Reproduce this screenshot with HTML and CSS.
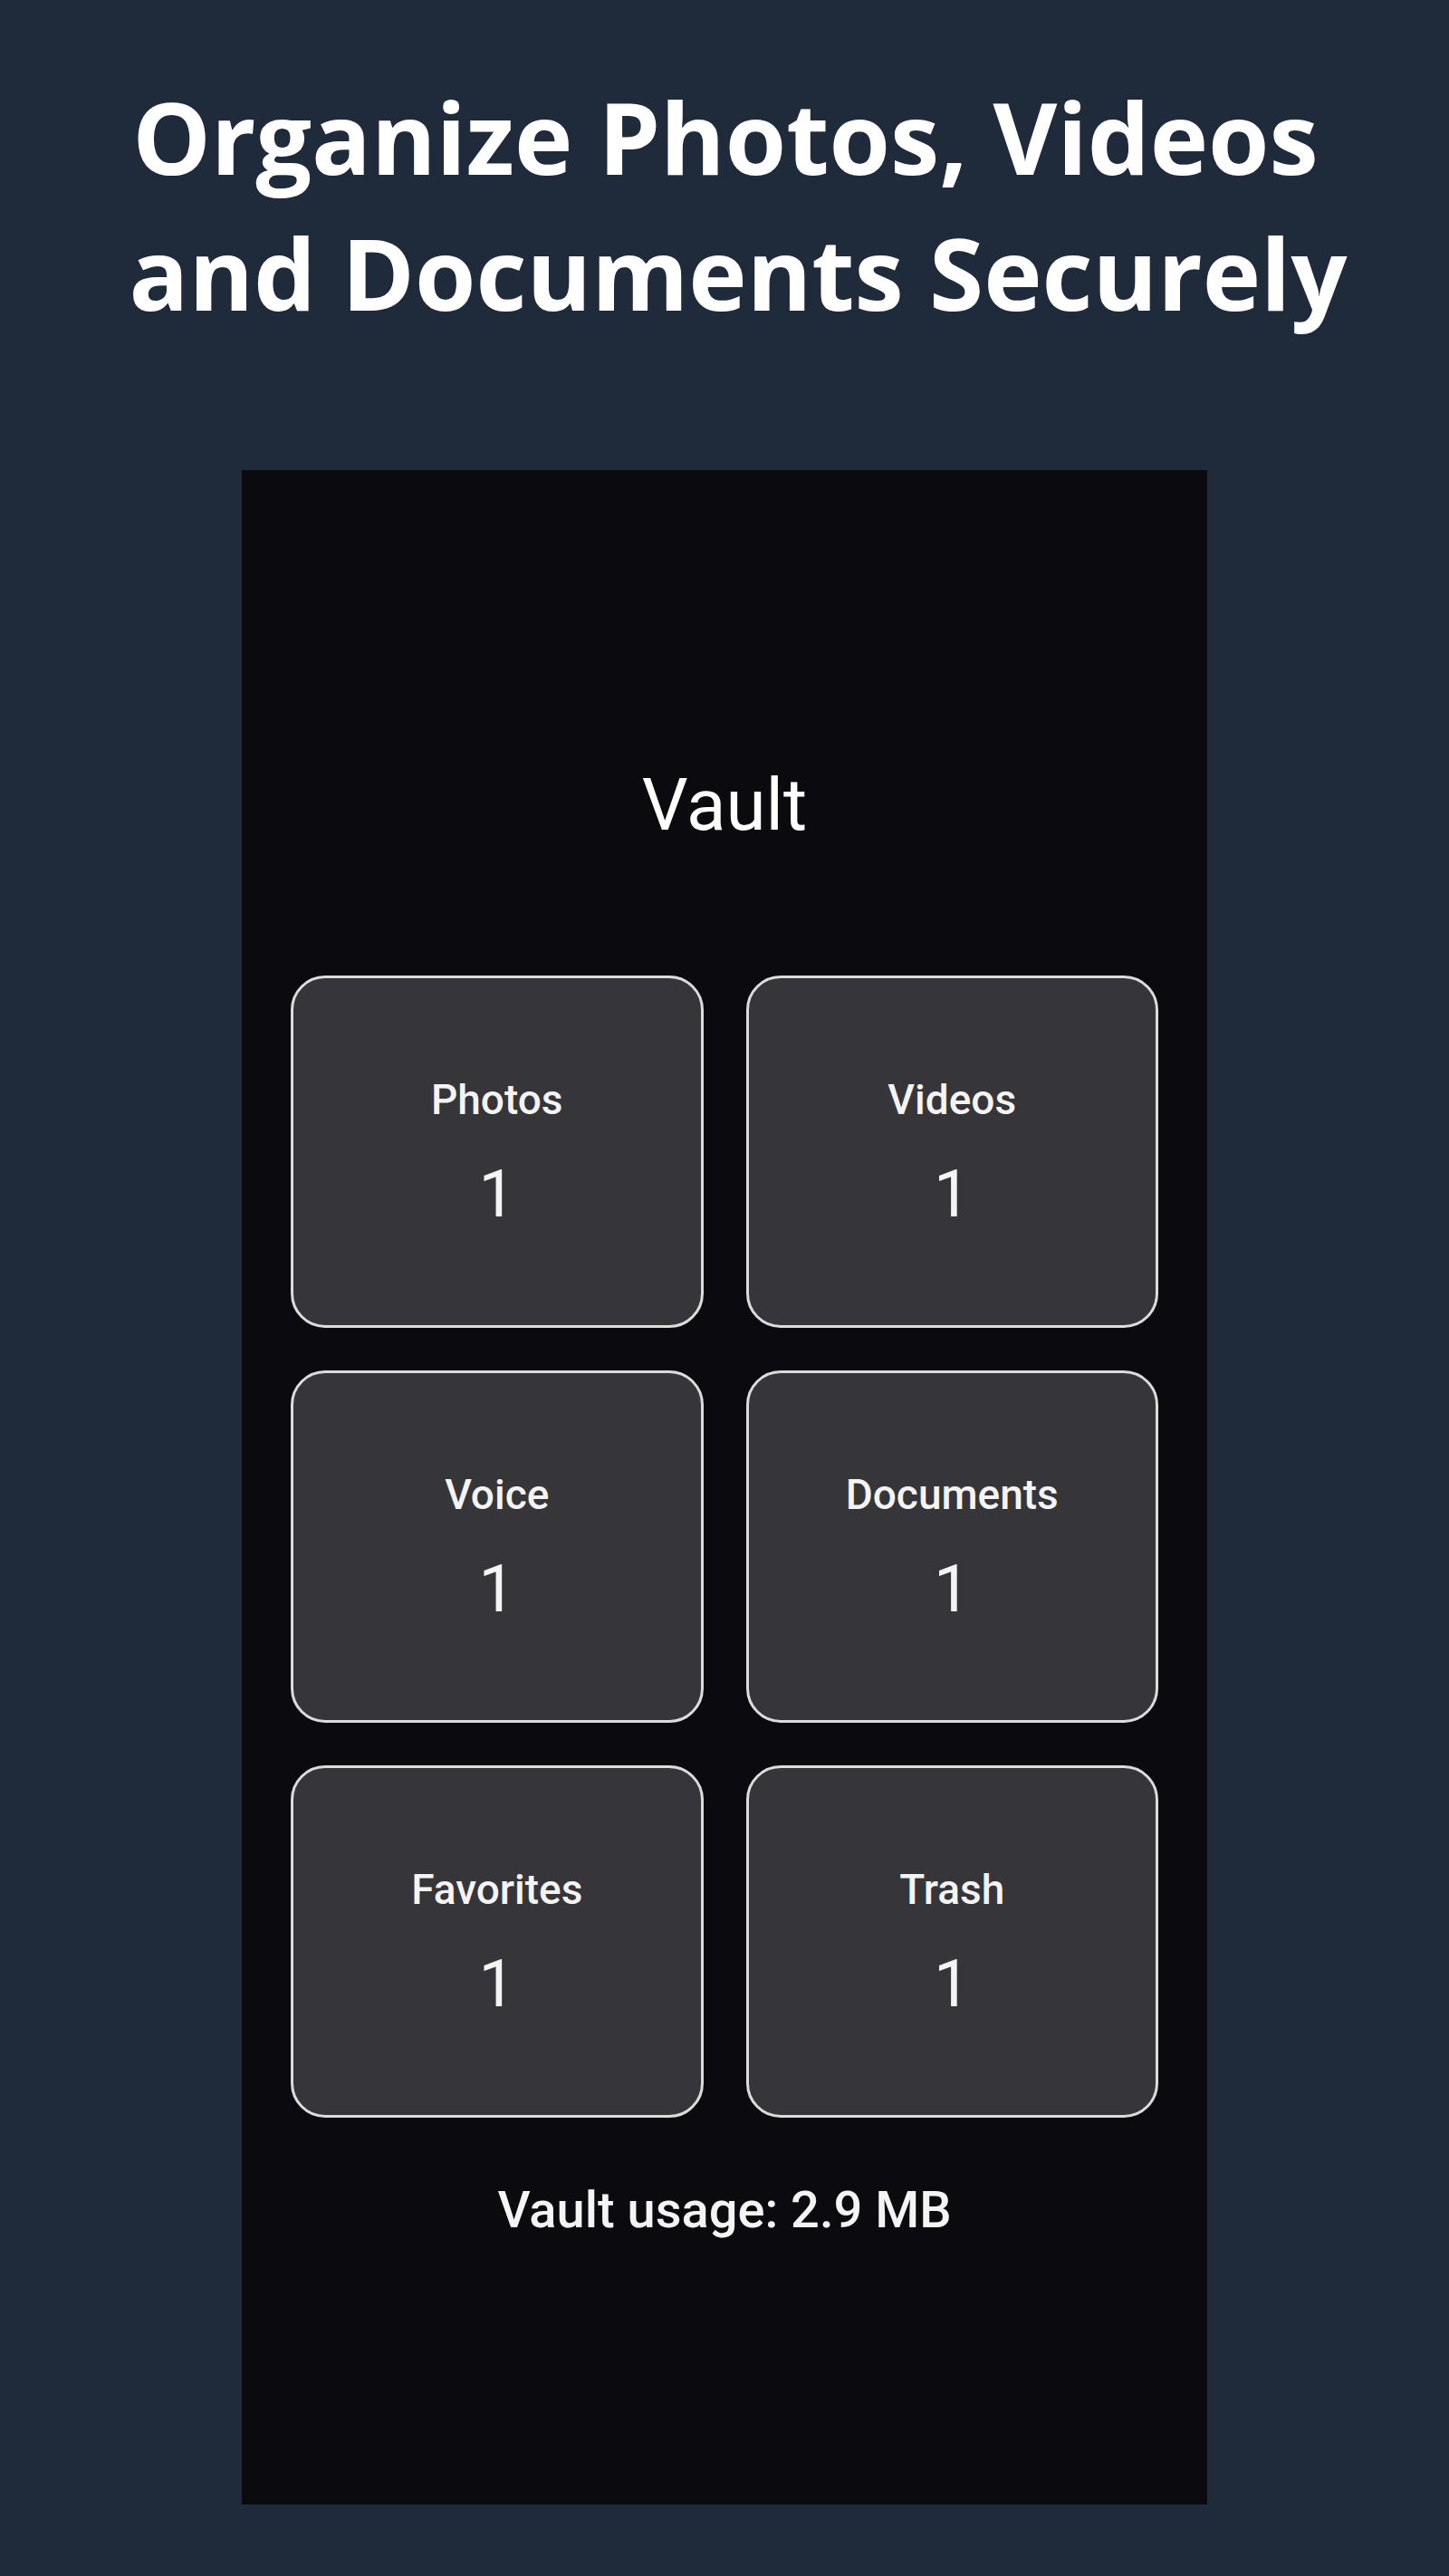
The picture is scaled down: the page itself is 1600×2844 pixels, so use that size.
FILE: index.html
```html
<!DOCTYPE html>
<html lang="en">
<head>
<meta charset="utf-8">
<title>Vault</title>
<link rel="stylesheet" href="styles.css">
</head>
<body>
<header class="hero">
  <h1 class="hero-title"><span class="hero-line hero-line-first">Organize Photos, Videos</span><span class="hero-line">and Documents Securely</span></h1>
</header>
<main class="phone">
  <h2 class="vault-title">Vault</h2>
  <section class="grid">
    <div class="card"><div class="card-label">Photos</div><div class="card-count">1</div></div>
    <div class="card"><div class="card-label">Videos</div><div class="card-count">1</div></div>
    <div class="card"><div class="card-label">Voice</div><div class="card-count">1</div></div>
    <div class="card"><div class="card-label">Documents</div><div class="card-count">1</div></div>
    <div class="card"><div class="card-label">Favorites</div><div class="card-count">1</div></div>
    <div class="card"><div class="card-label">Trash</div><div class="card-count">1</div></div>
  </section>
  <p class="usage">Vault usage: 2.9 MB</p>
</main>
</body>
</html>
```

FILE: styles.css
```css
* { box-sizing: border-box; }

html, body {
  margin: 0;
  padding: 0;
}

body {
  background: #1f2a3b;
  width: 1600px;
  height: 2844px;
  overflow: hidden;
  font-family: Roboto, "Liberation Sans", sans-serif;
  color: #ffffff;
}

.hero {
  padding-top: 76px;
  padding-left: 30px;
  height: 519px;
}

.hero-title {
  margin: 0;
  font-family: "Open Sans", "Liberation Sans", sans-serif;
  font-weight: 700;
  font-size: 109px;
  line-height: 150px;
  text-align: center;
  color: #ffffff;
}

.hero-line {
  display: block;
}

.hero-line-first {
  padding-right: 28px;
}

.phone {
  width: 1066px;
  height: 2246px;
  margin: 0 auto;
  background: #0b0b0f;
  padding: 323px 54px 0;
  display: flex;
  flex-direction: column;
  align-items: stretch;
}

.vault-title {
  margin: 0;
  font-weight: 400;
  font-size: 80px;
  line-height: 94px;
  text-align: center;
  color: #ffffff;
}

.grid {
  margin-top: 141px;
  display: grid;
  grid-template-columns: 1fr 1fr;
  grid-auto-rows: 389px;
  column-gap: 47px;
  row-gap: 47px;
}

.card {
  background: #363539;
  border: 3px solid #dcdcdc;
  border-radius: 38px;
  padding-top: 5px;
  display: flex;
  flex-direction: column;
  align-items: center;
  justify-content: center;
  gap: 36px;
}

.card-label {
  font-weight: 500;
  font-size: 46px;
  line-height: 54px;
  color: #f4f4f4;
}

.card-count {
  font-weight: 400;
  font-size: 72px;
  line-height: 84px;
  color: #f4f4f4;
}

.usage {
  margin: 69px 0 0;
  font-weight: 500;
  font-size: 56px;
  line-height: 66px;
  text-align: center;
  color: #f4f4f4;
}
```
